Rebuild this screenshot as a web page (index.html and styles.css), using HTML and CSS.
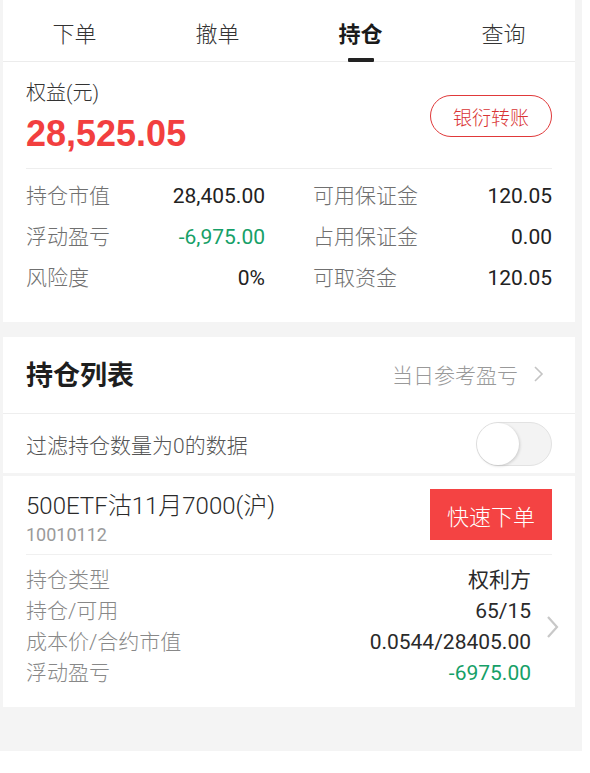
FILE: index.html
```html
<!DOCTYPE html>
<html lang="zh-CN">
<head>
  <meta charset="UTF-8">
  <title>持仓</title>
  <link rel="stylesheet" href="styles.css">
</head>
<body>
  <div class="app">
    <div class="tabs">
      <div class="tab">下单</div>
      <div class="tab">撤单</div>
      <div class="tab active">持仓</div>
      <div class="tab">查询</div>
    </div>

    <div class="card account">
      <div class="equity">
        <div>
          <div class="equity-label">权益(元)</div>
          <div class="equity-value">28,525.05</div>
        </div>
        <button class="btn-outline">银衍转账</button>
      </div>
      <div class="stats">
        <div class="stat"><span class="label">持仓市值</span><span class="val">28,405.00</span></div>
        <div class="stat"><span class="label">可用保证金</span><span class="val">120.05</span></div>
        <div class="stat"><span class="label">浮动盈亏</span><span class="val green">-6,975.00</span></div>
        <div class="stat"><span class="label">占用保证金</span><span class="val">0.00</span></div>
        <div class="stat"><span class="label">风险度</span><span class="val">0%</span></div>
        <div class="stat"><span class="label">可取资金</span><span class="val">120.05</span></div>
      </div>
    </div>

    <div class="card list">
      <div class="list-head">
        <h2>持仓列表</h2>
        <div class="more">当日参考盈亏
          <svg width="12" height="18" viewBox="0 0 12 18"><path d="M3 2l7 7-7 7" fill="none" stroke="#c4c4c4" stroke-width="1.6"/></svg>
        </div>
      </div>
      <div class="filter">
        <span class="filter-text">过滤持仓数量为0的数据</span>
        <div class="toggle"><div class="knob"></div></div>
      </div>
    </div>

    <div class="card position">
      <div class="pos-top">
        <div>
          <div class="pos-name">500ETF沽11月7000(沪)</div>
          <div class="pos-code">10010112</div>
        </div>
        <button class="btn-red">快速下单</button>
      </div>
      <div class="pos-body">
        <div class="pos-rows">
          <div class="row"><span class="label">持仓类型</span><span class="val">权利方</span></div>
          <div class="row"><span class="label">持仓/可用</span><span class="val">65/15</span></div>
          <div class="row"><span class="label">成本价/合约市值</span><span class="val">0.0544/28405.00</span></div>
          <div class="row"><span class="label">浮动盈亏</span><span class="val green">-6975.00</span></div>
        </div>
        <svg class="chev" width="14" height="26" viewBox="0 0 14 26"><path d="M3 3l9 10-9 10" fill="none" stroke="#c8c8c8" stroke-width="2.2"/></svg>
      </div>
    </div>
  </div>
</body>
</html>
```

FILE: styles.css
```css
body { margin: 0; background: #fff; font-family: Roboto, "Noto Sans CJK SC", sans-serif; color: #222; }
.app { width: 582px; height: 751px; background: #f4f4f4; padding: 0 7px 0 3px; box-sizing: border-box; overflow: hidden; }
.card { background: #fff; }

.tabs { display: flex; height: 62px; background: #fff; border-bottom: 1px solid #ececec; box-sizing: border-box; }
.tab { flex: 1; text-align: center; font-size: 22px; line-height: 26px; padding-top: 22px; color: #333; font-weight: 300; position: relative; }
.tab.active { font-weight: 700; color: #1a1a1a; }
.tab.active::after { content: ""; position: absolute; left: 50%; bottom: -1px; width: 26px; height: 4px; margin-left: -13px; background: #222; border-radius: 1px; }

.account { padding: 0 23px; }
.equity { display: flex; justify-content: space-between; align-items: flex-start; padding: 18px 0 12px; border-bottom: 1px solid #eee; }
.equity-label { font-size: 20px; line-height: 26px; color: #333; font-weight: 300; }
.equity-value { font-size: 36px; line-height: 44px; margin-top: 6px; font-weight: 700; color: #f23f3f; font-family: "Liberation Sans", Roboto, sans-serif; }
.btn-outline { margin-top: 15px; width: 122px; height: 42px; border: 1.5px solid #e0393a; border-radius: 21px; background: #fff; color: #d93434; font-size: 19px; font-family: inherit; font-weight: 300; padding: 0; }

.stats { display: grid; grid-template-columns: 1fr 1fr; column-gap: 48px; padding: 7px 0 23px; }
.stat { display: flex; justify-content: space-between; line-height: 41px; }
.label { font-size: 21px; color: #707070; font-weight: 300; }
.val { font-size: 21px; color: #222; }
.green { color: #16a068; }

.list { margin-top: 15px; }
.list-head { display: flex; justify-content: space-between; align-items: center; height: 77px; padding: 0 23px 3px; box-sizing: border-box; border-bottom: 1px solid #eee; }
.list-head h2 { margin: 0; font-size: 27px; font-weight: 700; color: #1e1e1e; }
.more { display: flex; align-items: center; gap: 14px; font-size: 21px; color: #999; font-weight: 300; margin-right: 8px; }
.filter { display: flex; justify-content: space-between; align-items: center; height: 59px; padding: 0 23px; }
.filter-text { font-size: 21px; color: #555; font-weight: 300; }
.toggle { display: flex; align-items: center; width: 76px; height: 44px; box-sizing: border-box; border-radius: 22px; background: #f3f3f3; border: 1px solid #e2e2e2; }
.knob { width: 42px; height: 42px; border-radius: 50%; background: #fff; box-shadow: 1px 1px 3px rgba(0, 0, 0, 0.16); }

.position { margin-top: 3px; padding: 0 0 18px 23px; }
.pos-top { display: flex; justify-content: space-between; align-items: flex-start; padding-top: 13px; padding-bottom: 8px; margin-right: 23px; border-bottom: 1px solid #f0f0f0; }
.pos-name { font-size: 24px; line-height: 28px; margin-top: 3px; color: #2a2a2a; font-weight: 300; }
.pos-code { font-size: 18px; line-height: 22px; margin-top: 4px; color: #9a9a9a; }
.btn-red { width: 122px; height: 51px; border: none; background: #f44343; color: #fff; font-size: 22px; font-family: inherit; font-weight: 300; padding: 0; }
.pos-body { display: flex; align-items: center; padding-top: 10px; }
.pos-rows { flex: 1; }
.row { display: flex; justify-content: space-between; line-height: 31px; }
.row .label { color: #888; }
.row .val { color: #2a2a2a; }
.row .val.green { color: #16a068; }
.chev { margin: 0 16px 0 14px; }
```
